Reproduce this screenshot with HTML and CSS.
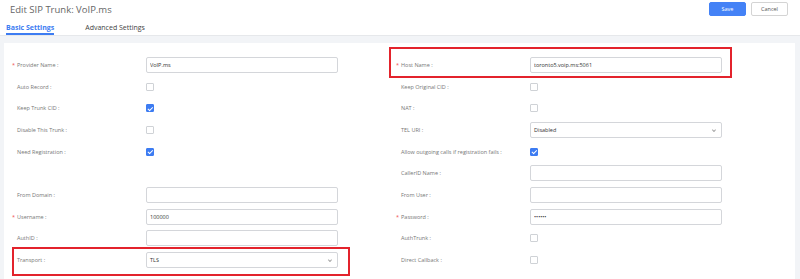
FILE: index.html
```html
<!DOCTYPE html>
<html lang="en">
<head>
    <meta charset="UTF-8">
    <title>Edit SIP Trunk</title>
    <link rel="stylesheet" href="styles.css">
</head>
<body>
    <div class="page-header">
        <h1 class="page-title">Edit SIP Trunk: VoIP.ms</h1>
        <div class="header-actions">
            <button class="btn btn-primary">Save</button>
            <button class="btn">Cancel</button>
        </div>
    </div>

    <div class="tabs">
        <div class="tab active">Basic Settings</div>
        <div class="tab">Advanced Settings</div>
    </div>

    <div class="panel">
        <div class="form-grid">
            <!-- row 1 -->
            <div class="label required">Provider Name :</div>
            <div class="control"><input class="input" type="text" value="VoIP.ms"></div>
            <div class="label required">Host Name :</div>
            <div class="control"><input class="input" type="text" value="toronto5.voip.ms:5061"></div>

            <!-- row 2 -->
            <div class="label">Auto Record :</div>
            <div class="control"><span class="checkbox"></span></div>
            <div class="label">Keep Original CID :</div>
            <div class="control"><span class="checkbox"></span></div>

            <!-- row 3 -->
            <div class="label">Keep Trunk CID :</div>
            <div class="control"><span class="checkbox checked"></span></div>
            <div class="label">NAT :</div>
            <div class="control"><span class="checkbox"></span></div>

            <!-- row 4 -->
            <div class="label">Disable This Trunk :</div>
            <div class="control"><span class="checkbox"></span></div>
            <div class="label">TEL URI :</div>
            <div class="control"><div class="select">Disabled<span class="arrow"></span></div></div>

            <!-- row 5 -->
            <div class="label">Need Registration :</div>
            <div class="control"><span class="checkbox checked"></span></div>
            <div class="label">Allow outgoing calls if registration fails :</div>
            <div class="control"><span class="checkbox checked"></span></div>

            <!-- row 6 -->
            <div class="label"></div>
            <div class="control"></div>
            <div class="label">CallerID Name :</div>
            <div class="control"><input class="input" type="text" value=""></div>

            <!-- row 7 -->
            <div class="label">From Domain :</div>
            <div class="control"><input class="input" type="text" value=""></div>
            <div class="label">From User :</div>
            <div class="control"><input class="input" type="text" value=""></div>

            <!-- row 8 -->
            <div class="label required">Username :</div>
            <div class="control"><input class="input" type="text" value="100000"></div>
            <div class="label required">Password :</div>
            <div class="control"><input class="input" type="password" value="123456"></div>

            <!-- row 9 -->
            <div class="label">AuthID :</div>
            <div class="control"><input class="input" type="text" value=""></div>
            <div class="label">AuthTrunk :</div>
            <div class="control"><span class="checkbox"></span></div>

            <!-- row 10 -->
            <div class="label">Transport :</div>
            <div class="control"><div class="select">TLS<span class="arrow"></span></div></div>
            <div class="label">Direct Callback :</div>
            <div class="control"><span class="checkbox"></span></div>
        </div>

        <div class="highlight highlight-host"></div>
        <div class="highlight highlight-transport"></div>
    </div>
</body>
</html>
```

FILE: styles.css
```css
* {
    margin: 0;
    padding: 0;
    box-sizing: border-box;
}

body {
    font-family: "Open Sans", "Noto Sans", sans-serif;
    background-color: #f2f4f7;
    color: #555;
    height: 279px;
    overflow: hidden;
}

.page-header {
    display: flex;
    justify-content: space-between;
    align-items: flex-start;
    height: 20px;
    padding: 2px 12px 0 10px;
    background-color: #fff;
}

.page-title {
    font-size: 9.5px;
    font-weight: normal;
    color: #666;
    line-height: 13px;
    padding-top: 1px;
}

.header-actions {
    display: flex;
    gap: 5px;
}

.btn {
    font-family: inherit;
    font-size: 5.5px;
    height: 14px;
    padding: 0 9px;
    border: 1px solid #d4d4d4;
    border-radius: 2px;
    background-color: #fff;
    color: #555;
}

.btn-primary {
    width: 37px;
    background-color: #4482f6;
    border-color: #4482f6;
    color: #fff;
}

.tabs {
    display: flex;
    gap: 31px;
    height: 16px;
    padding-left: 6px;
    background-color: #fff;
    border-bottom: 1px solid #e6e8eb;
}

.tab {
    font-size: 7px;
    line-height: 13px;
    padding-top: 1px;
    color: #444;
}

.tab.active {
    color: #3d7cf2;
    font-weight: bold;
    border-bottom: 2px solid #3d7cf2;
}

.panel {
    position: relative;
    margin: 7px 5px 0 4px;
    height: 240px;
    background-color: #fff;
    padding: 11px 0 0 8px;
}

.form-grid {
    display: grid;
    grid-template-columns: 134px 250px 134px 192px;
    grid-auto-rows: 21.7px;
    align-items: center;
}

.label {
    font-size: 5.5px;
    color: #777;
    padding-left: 5px;
    white-space: nowrap;
}

.label.required {
    padding-left: 0;
}

.label.required::before {
    content: "*";
    color: #f04b4b;
    margin-right: 2px;
}

.control {
    display: flex;
    align-items: center;
}

.input,
.select {
    width: 192px;
    height: 16px;
    border: 1px solid #d4d6da;
    border-radius: 2px;
    font-family: inherit;
    font-size: 5.5px;
    color: #333;
    padding: 0 3px;
    background-color: #fff;
    outline: none;
}

.select {
    display: flex;
    align-items: center;
    justify-content: space-between;
    padding-right: 7px;
}

.arrow {
    width: 2.5px;
    height: 2.5px;
    border-right: 0.6px solid #aaa;
    border-bottom: 0.6px solid #aaa;
    transform: rotate(45deg) translateY(-1px);
}

.checkbox {
    display: inline-block;
    position: relative;
    width: 8px;
    height: 8px;
    border: 1px solid #cfd2d6;
    border-radius: 1px;
    background-color: #fff;
}

.checkbox.checked {
    background-color: #3d7cf2;
    border-color: #3d7cf2;
}

.checkbox.checked::after {
    content: "";
    position: absolute;
    left: 2px;
    top: 0.5px;
    width: 2px;
    height: 3.5px;
    border-right: 1px solid #fff;
    border-bottom: 1px solid #fff;
    transform: rotate(45deg);
}

.highlight {
    position: absolute;
    border-width: 2px;
    border-style: solid;
    border-color: #e3232c;
}

.highlight-host {
    left: 385px;
    top: 4px;
    width: 343px;
    height: 31px;
}

.highlight-transport {
    left: 8px;
    top: 204px;
    width: 338px;
    height: 29px;
}
```
